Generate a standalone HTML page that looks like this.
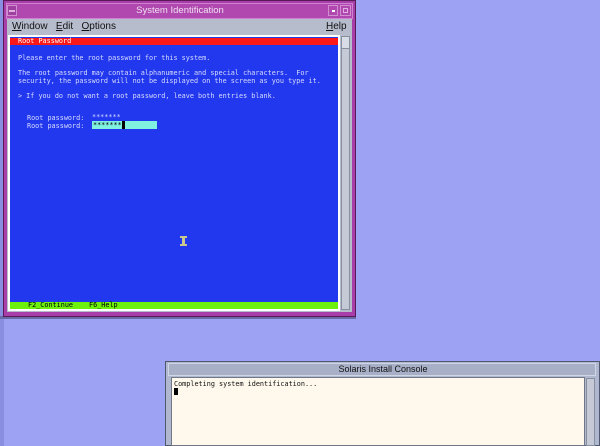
<!DOCTYPE html>
<html><head><style>
*{margin:0;padding:0;box-sizing:border-box}
body{width:600px;height:446px;background:#9ea2f2;position:relative;overflow:hidden;font-family:"Liberation Sans",sans-serif}
.abs{position:absolute}
.mono{font-family:"DejaVu Sans Mono","Liberation Mono",monospace;font-size:6.8px;line-height:8px;white-space:pre}
</style></head><body>
<div class="abs" style="left:0;top:0;width:4px;height:446px;background:#8a8ee0"></div>
<div class="abs" style="left:0;top:316px;width:356px;height:3px;background:#6a6aa8"></div>
<div class="abs" style="left:3px;top:0;width:353px;height:317px;background:#a83ea8;border:1px solid #5a1a5a"></div>
<div class="abs" style="left:6px;top:3px;width:347px;height:16px;background:#b048b0;border:1px solid #d080d0"></div>
<div class="abs" style="left:7px;top:5px;width:10px;height:11px;background:#a040a0;border:1px solid #d090d0"><div style="margin:4px 1px;height:2px;background:#e0b0e0"></div></div>
<div class="abs" style="left:328px;top:5px;width:10px;height:11px;border:1px solid #d090d0"><div style="margin:4px 3px;width:3px;height:2px;background:#fff"></div></div>
<div class="abs" style="left:340px;top:5px;width:11px;height:11px;border:1px solid #d090d0"><div style="margin:2px;width:5px;height:5px;border:1px solid #e0b0e0"></div></div>
<div class="abs" style="left:0;top:5px;width:360px;text-align:center;color:#f0e0f0;font-size:9.5px">System Identification</div>
<div class="abs" style="left:7px;top:19px;width:345px;height:15px;background:#b6bccc"></div>
<div class="abs" style="left:12px;top:19px;font-size:10px;line-height:15px;color:#111"><u>W</u>indow&nbsp;&nbsp;&nbsp;<u>E</u>dit&nbsp;&nbsp;&nbsp;<u>O</u>ptions</div>
<div class="abs" style="left:326px;top:19px;font-size:10px;line-height:15px;color:#111"><u>H</u>elp</div>
<div class="abs" style="left:7px;top:34px;width:345px;height:278px;background:#b6bccc"></div>
<div class="abs" style="left:8px;top:35px;width:332px;height:276px;background:#fff"></div>
<div class="abs" style="left:10px;top:37px;width:328px;height:272px;background:#2238ee"></div>
<div class="abs" style="left:10px;top:38px;width:328px;height:7px;background:#ff1818"></div>
<div class="abs mono" style="left:18px;top:38px;color:#fff;line-height:7px">Root Password</div>
<div class="abs mono" style="left:18px;top:54px;color:#d8dcff">Please enter the root password for this system.</div>
<div class="abs mono" style="left:18px;top:69px;color:#d8dcff;line-height:8px">The root password may contain alphanumeric and special characters.  For
security, the password will not be displayed on the screen as you type it.</div>
<div class="abs mono" style="left:18px;top:92px;color:#d8dcff">&gt; If you do not want a root password, leave both entries blank.</div>
<div class="abs mono" style="left:27px;top:114px;color:#d8dcff;line-height:8px">Root password:
Root password:</div>
<div class="abs mono" style="left:92px;top:113px;color:#d8dcff">*******</div>
<div class="abs" style="left:92px;top:121px;width:65px;height:8px;background:#80f0e0"></div>
<div class="abs" style="left:122px;top:121px;width:3px;height:8px;background:#000"></div>
<div class="abs mono" style="left:93px;top:121px;color:#000">*******</div>
<div class="abs" style="left:180px;top:236px;width:7px;height:10px">
<div style="position:absolute;left:0;top:0;width:7px;height:2px;background:#c8c890"></div>
<div style="position:absolute;left:2px;top:2px;width:3px;height:6px;background:#c8c890"></div>
<div style="position:absolute;left:0;top:8px;width:7px;height:2px;background:#c8c890"></div></div>
<div class="abs" style="left:10px;top:302px;width:328px;height:7px;background:#6cf00c"></div>
<div class="abs mono" style="left:28px;top:302px;color:#000;line-height:7px">F2_Continue</div>
<div class="abs mono" style="left:89px;top:302px;color:#000;line-height:7px">F6_Help</div>
<div class="abs" style="left:341px;top:36px;width:9px;height:274px;background:#c6cad6;border:1px solid #8890a0"></div>
<div class="abs" style="left:342px;top:37px;width:7px;height:12px;background:#d8dce6;border-bottom:1px solid #8890a0"></div>
<div class="abs" style="left:165px;top:361px;width:435px;height:85px;background:#b0b8d0;border:1px solid #505870"></div>
<div class="abs" style="left:168px;top:363px;width:428px;height:13px;background:#a8b0c8;border:1px solid #d0d6e6"></div>
<div class="abs" style="left:168px;top:364px;width:430px;color:#111;font-size:9px;line-height:11px;text-align:center">Solaris Install Console</div>
<div class="abs" style="left:171px;top:377px;width:414px;height:69px;background:#fff8ec;border:1px solid #707888"></div>
<div class="abs mono" style="left:174px;top:380px;color:#111">Completing system identification...</div>
<div class="abs" style="left:174px;top:388px;width:4px;height:7px;background:#000"></div>
<div class="abs" style="left:586px;top:378px;width:9px;height:68px;background:#c6cad6;border:1px solid #8890a0"></div>
</body></html>
